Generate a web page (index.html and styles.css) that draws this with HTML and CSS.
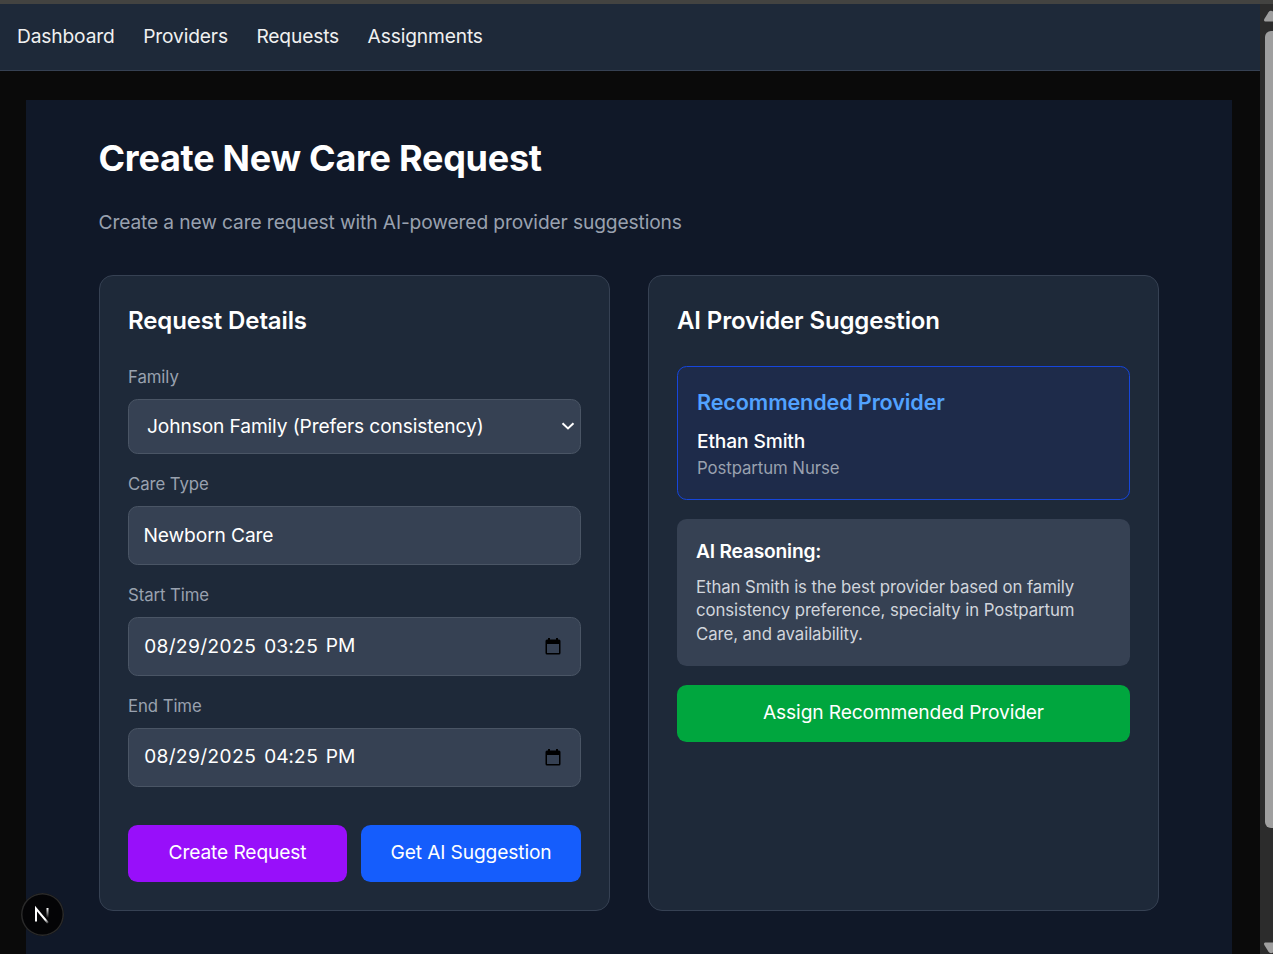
FILE: index.html
```html
<!DOCTYPE html>
<html lang="en">
<head>
<meta charset="utf-8">
<title>Create New Care Request</title>
<link rel="stylesheet" href="styles.css">
</head>
<body>
<div class="window">
  <div class="page">
    <nav class="nav">
      <a>Dashboard</a><a>Providers</a><a>Requests</a><a>Assignments</a>
    </nav>
    <main class="main">
      <h1 class="title">Create New Care Request</h1>
      <p class="subtitle">Create a new care request with AI-powered provider suggestions</p>
      <div class="columns">
        <section class="card">
          <h2 class="card-title">Request Details</h2>
          <div class="field">
            <div class="label">Family</div>
            <div class="control select"><span>Johnson Family (Prefers consistency)</span>
              <svg class="chevron" width="14" height="8" viewBox="0 0 14 8"><path d="M1.5 1.2 7 6.4 12.500 1.200" fill="none" stroke="#fff" stroke-width="2"/></svg>
            </div>
          </div>
          <div class="field">
            <div class="label">Care Type</div>
            <div class="control"><span>Newborn Care</span></div>
          </div>
          <div class="field">
            <div class="label">Start Time</div>
            <div class="control date"><span>08/29/2025</span><span>03:25</span><span class="raised">PM</span>
              <svg class="calendar" width="16" height="17" viewBox="0 0 16 17"><path d="M3 0h2v1.500h6V0h2v1.500h1A1.500 1.500 0 0 1 15.500 3v12a1.500 1.500 0 0 1-1.500 1.500H2A1.500 1.500 0 0 1 .5 15V3A1.500 1.500 0 0 1 2 1.500h1zM2 6v9h12V6z" fill="#000" fill-rule="evenodd"/></svg>
            </div>
          </div>
          <div class="field">
            <div class="label">End Time</div>
            <div class="control date end"><span>08/29/2025</span><span>04:25</span><span>PM</span>
              <svg class="calendar" width="16" height="17" viewBox="0 0 16 17"><path d="M3 0h2v1.500h6V0h2v1.500h1A1.500 1.500 0 0 1 15.500 3v12a1.500 1.500 0 0 1-1.500 1.500H2A1.500 1.500 0 0 1 .5 15V3A1.500 1.500 0 0 1 2 1.500h1zM2 6v9h12V6z" fill="#000" fill-rule="evenodd"/></svg>
            </div>
          </div>
          <div class="actions">
            <button class="button purple">Create Request</button>
            <button class="button blue">Get AI Suggestion</button>
          </div>
        </section>
        <section class="card">
          <h2 class="card-title">AI Provider Suggestion</h2>
          <div class="recommended">
            <h3>Recommended Provider</h3>
            <p class="name">Ethan Smith</p>
            <p class="role">Postpartum Nurse</p>
          </div>
          <div class="reasoning">
            <h4>AI Reasoning:</h4>
            <p>Ethan Smith is the best provider based on family consistency preference, specialty in Postpartum Care, and availability.</p>
          </div>
          <button class="button green">Assign Recommended Provider</button>
        </section>
      </div>
    </main>
  </div>
  <div class="scrollbar">
    <svg class="arrow" width="13" height="12" viewBox="0 0 13 12"><path d="M5 11.500 Q3.500 11 4.300 9 L8.500 2.200 Q9.500 .8 11 .8 Q12.500 .8 13.500 2.200 L18 11.500z" fill="#9f9f9f"/></svg>
    <div class="thumb"></div>
    <svg class="arrow down" width="13" height="12" viewBox="0 0 13 12"><path d="M5 .5 Q3.500 1 4.300 3 L8.500 9.800 Q9.500 11.200 11 11.200 Q12.500 11.200 13.500 9.800 L18 .5z" fill="#9f9f9f"/></svg>
  </div>
</div>
<div class="dev-badge">
  <svg width="43" height="43" viewBox="0 0 43 43">
    <defs>
      <linearGradient id="diag" gradientUnits="userSpaceOnUse" x1="22" y1="22" x2="28" y2="30"><stop offset="0" stop-color="#fff"/><stop offset=".5" stop-color="#fff"/><stop offset="1" stop-color="#fff" stop-opacity=".1"/></linearGradient>
      <linearGradient id="stem" gradientUnits="userSpaceOnUse" x1="0" y1="15" x2="0" y2="25"><stop offset="0" stop-color="#fff"/><stop offset="1" stop-color="#fff" stop-opacity="0"/></linearGradient>
    </defs>
    <path d="M15 28.500V15.500L27 30" fill="none" stroke="url(#diag)" stroke-width="2"/>
    <path d="M26.500 15v10" stroke="url(#stem)" stroke-width="2"/>
  </svg>
</div>
</body>
</html>
```
FILE: styles.css
```css
* { box-sizing: border-box; margin: 0; padding: 0; }
body {
  height: 954px;
  overflow: hidden;
  background: #0a0a0a;
  color: #fff;
  font-family: Inter, sans-serif;
  font-size: 19.2px;
  line-height: 28.8px;
  letter-spacing: -.125px;
}
.window {
  display: flex;
  height: 954px;
  border-top: 4px solid #434341;
}
.page { width: 1260px; overflow: hidden; }
.nav {
  display: flex;
  gap: 28.500px;
  height: 67px;
  padding: 18px 17px 0;
  background: #1e2939;
  border-bottom: 1px solid #364153;
  color: #f0f0f0;
  letter-spacing: -.145px;
}
.main {
  width: 1206px;
  height: 900px;
  margin: 29px 0 0 26px;
  padding: 37px 73px 0;
  background: #101828;
}
.title { margin-left: -.5px; font-size: 36px; font-weight: 700; line-height: 43px; letter-spacing: -.26px; }
.subtitle { margin: 28px 0 0 -.5px; color: #99a1af; }
.columns {
  display: grid;
  grid-template-columns: 511px 511px;
  gap: 38px;
  margin-top: 38px;
}
.card {
  height: 636px;
  padding: 28px;
  background: #1e2939;
  border: 1px solid #364153;
  border-radius: 14px;
}
.card-title { font-size: 24px; font-weight: 600; line-height: 34px; margin-bottom: 28px; }
.field { margin-bottom: 18px; }
.label { color: #99a1af; font-size: 16.8px; line-height: 24px; letter-spacing: -.09px; margin-bottom: 10px; }
.card-title + .field .label { margin-top: -1px; }
.control {
  display: flex;
  align-items: center;
  height: 59px;
  padding: 0 14.500px;
  background: #364153;
  border: 1px solid #4a5565;
  border-radius: 9.600px;
}
.select { height: 55px; padding: 0 5px 0 18px; }
.select span { margin-top: 1px; }
.chevron { margin-left: auto; }
.date { gap: 7.500px; padding: 0 19px 0 15px; font-variant-numeric: tabular-nums; letter-spacing: -.1px; }
.date .raised { margin-top: -2px; }
.date.end span { margin-top: -2px; }
.calendar { margin-left: auto; }
.actions { display: grid; grid-template-columns: 219px 220px; gap: 14px; margin-top: 38px; }
.button {
  height: 57px;
  padding-bottom: 2px;
  border: 0;
  border-radius: 9.600px;
  color: #fff;
  font: 400 19.2px/28.8px Inter, sans-serif;
  letter-spacing: -.13px;
}
.purple { background: #980ffa; }
.blue { background: #155dfc; }
.green { width: 100%; background: #00a63e; }
.recommended {
  height: 134px;
  padding: 19px;
  margin-bottom: 19px;
  background: #1e2b4a;
  border: 1px solid #1646dc;
  border-radius: 9.600px;
}
.recommended h3 { color: #51a2ff; font-size: 21.6px; font-weight: 600; line-height: 32px; margin-bottom: 9px; }
.name { font-weight: 500; line-height: 28px; }
.role { margin-top: 1px; color: #99a1af; font-size: 16.8px; line-height: 24px; letter-spacing: -.09px; }
.reasoning {
  height: 147px;
  padding: 18px 19px;
  margin-bottom: 19px;
  background: #364153;
  border-radius: 9.600px;
}
.reasoning h4 { font-size: 19.2px; font-weight: 600; margin-bottom: 10px; letter-spacing: -.2px; }
.reasoning p { color: #d1d5dc; font-size: 16.8px; line-height: 23.8px; letter-spacing: -.09px; }
.scrollbar {
  display: flex;
  flex-direction: column;
  width: 13px;
  overflow: hidden;
  background: #2c2c2c;
}
.arrow { flex: none; margin-top: 6px; }
.thumb {
  width: 14px;
  height: 797px;
  flex: none;
  margin: 9px 0 0 5px;
  background: #9f9f9f;
  border-radius: 6px;
}
.down { margin-top: 114px; }
.dev-badge {
  position: absolute;
  left: 21.400px;
  top: 893px;
  width: 43px;
  height: 43px;
  border-radius: 50%;
  background: #040406;
  box-shadow: inset 0 0 0 1.500px #2a2a2a;
}
```
